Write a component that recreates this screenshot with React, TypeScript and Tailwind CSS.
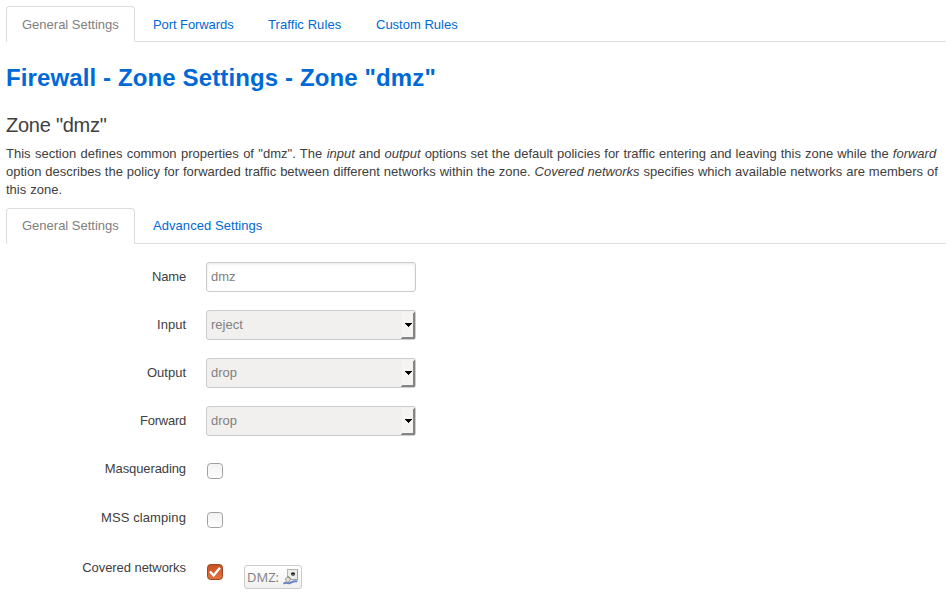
import type { ReactNode } from 'react';

function Tab({ active, children, className = '' }: { active?: boolean; children: ReactNode; className?: string }) {
  return (
    <li
      className={`h-9 whitespace-nowrap rounded-t border px-[15px] ${
        active ? 'border-[#ddd] border-b-white bg-white text-[#808080]' : 'border-transparent text-[#0069d6]'
      } ${className}`}
    >
      {children}
    </li>
  );
}

function Row({ label, children, className = '', tracking = '' }: { label: string; children: ReactNode; className?: string; tracking?: string }) {
  return (
    <div className={`flex ${className}`}>
      <label className={`w-[180px] shrink-0 pt-[6px] text-right leading-[18px] ${tracking}`}>{label}</label>
      <div className="ml-5">{children}</div>
    </div>
  );
}

function Select({ value }: { value: string }) {
  return (
    <div className="flex h-[30px] w-[210px] rounded-[3px] border border-[#ccc] bg-[#f1f0ee] text-[#808080]">
      <span className="flex-1 pl-1 leading-[27px]">{value}</span>
      <svg width="14" height="28" viewBox="0 0 14 28" shapeRendering="crispEdges">
        <path d="M1 1h12v26H1z" fill="#f5f4f3" />
        <path d="M0 27h1v-1h11V2h1V1h1v27H0z" fill="#858585" />
        <path d="M4 12h7v1h-1v1H9v1H8v1H7v-1H6v-1H5v-1H4z" fill="#000" />
      </svg>
    </div>
  );
}

function Checkbox({ checked }: { checked?: boolean }) {
  return (
    <svg width="16" height="16" viewBox="0 0 16 16" className="block">
      <defs>
        <linearGradient id="boxFill" x1="0" y1="0" x2="0" y2="1">
          <stop offset="0" stopColor="#f1f1f1" />
          <stop offset="1" stopColor="#fff" />
        </linearGradient>
        <linearGradient id="boxOn" x1="0" y1="0" x2="0" y2="1">
          <stop offset="0" stopColor="#c9501f" />
          <stop offset="1" stopColor="#e4733f" />
        </linearGradient>
      </defs>
      <rect x=".5" y=".5" width="15" height="15" rx="3.2" fill={checked ? 'url(#boxOn)' : 'url(#boxFill)'} stroke={checked ? '#9b4828' : '#a0a0a0'} />
      {checked && <path d="M3 7.500l3.600 4L13 3.800" fill="none" stroke="#fff" strokeWidth="2.4" />}
    </svg>
  );
}

function NetworkIcon() {
  return (
    <svg width="16" height="16" viewBox="0 0 16 16">
      <rect x="4.5" y=".5" width="10" height="10" fill="#ececea" stroke="#b5b5b2" />
      <path d="M14.5 .5v10H8" fill="none" stroke="#a0a09d" />
      <ellipse cx="10" cy="5" rx="2" ry="1.700" fill="#1c1c1c" />
      <path d="M9 5h2v1H9z" fill="#747a45" />
      <path d="M.5 14.800c2.500-2.300 4.500 0 6.500-.8s4-2.500 7.500-1.600" fill="none" stroke="#6482cd" strokeWidth="2" />
      <path d="M2.500 9.500l3-2 2 2-1 3-3 1z" fill="#deded8" stroke="#8a8a88" strokeWidth=".8" />
      <path d="M5 7.500l2 2" stroke="#555" />
    </svg>
  );
}

export default function App() {
  return (
    <main className="h-[598px] w-[952px] overflow-hidden bg-white px-1.5 pt-1.5 font-['Liberation_Sans',Arial,sans-serif] text-[13px] leading-[18px] text-[#404040]">
      <ul className="flex h-9 w-[940px] border-b border-[#ddd] leading-[35px]">
        <Tab active className="mr-[2px] w-[129px]">General Settings</Tab>
        <Tab className="w-[115px] tracking-[-0.08px]">Port Forwards</Tab>
        <Tab className="w-[108px] tracking-[0.08px]">Traffic Rules</Tab>
        <Tab>Custom Rules</Tab>
      </ul>
      <h2 className="mt-[18px] text-2xl font-bold leading-9 tracking-[0.12px] text-[#0069d6]">Firewall - Zone Settings - Zone "dmz"</h2>
      <h3 className="mt-[11px] text-[20px] leading-9 tracking-[-0.25px]">Zone "dmz"</h3>
      <p className="mt-[2px] whitespace-nowrap">
        <span className="block [word-spacing:0.37px]"><span className="[word-spacing:0.75px]">This section defines common properties of "dmz". The </span><em>input</em> and <em>output</em> options set the default policies for traffic entering and leaving this zone while the <em>forward</em></span>
        <span className="block [word-spacing:0.28px]">option describes the policy for forwarded traffic between different networks within the zone. <em>Covered networks</em> specifies which available networks are members of</span>
        <span className="block [word-spacing:0.5px]">this zone.</span>
      </p>
      <ul className="mt-[9px] flex h-9 w-[940px] border-b border-[#ddd] leading-[33px]">
        <Tab active className="mr-[2px] w-[129px]">General Settings</Tab>
        <Tab className="tracking-[0.06px]">Advanced Settings</Tab>
      </ul>
      <form className="pt-[18px]">
        <Row label="Name" className="h-12" tracking="tracking-[-0.15px]">
          <div className="h-[30px] w-[210px] rounded-[3px] border border-[#ccc] pl-1 leading-[27px] text-[#808080] shadow-[inset_0_1px_3px_rgba(0,0,0,0.1)]">dmz</div>
        </Row>
        <Row label="Input" className="h-12"><Select value="reject" /></Row>
        <Row label="Output" className="h-12"><Select value="drop" /></Row>
        <Row label="Forward" className="h-12" tracking="tracking-[-0.25px]"><Select value="drop" /></Row>
        <Row label="Masquerading" className="h-[49px]" tracking="tracking-[-0.1px]"><div className="pl-px pt-[9px]"><Checkbox /></div></Row>
        <Row label="MSS clamping" className="h-[50px]" tracking="tracking-[0.1px]"><div className="pl-px pt-[9px]"><Checkbox /></div></Row>
        <Row label="Covered networks" tracking="tracking-[-0.06px]">
          <div className="flex pl-px pt-[11px]">
            <Checkbox checked />
            <div className="ml-[21px] mt-px flex h-6 w-[58px] items-center rounded-[3px] border border-[#ccc] bg-gradient-to-b from-white to-[#f0f0f0] pl-[2px] font-['Open_Sans',sans-serif] text-[#808080]">
              <span className="w-9 leading-[22px]">DMZ:</span>
              <NetworkIcon />
            </div>
          </div>
        </Row>
      </form>
    </main>
  );
}
